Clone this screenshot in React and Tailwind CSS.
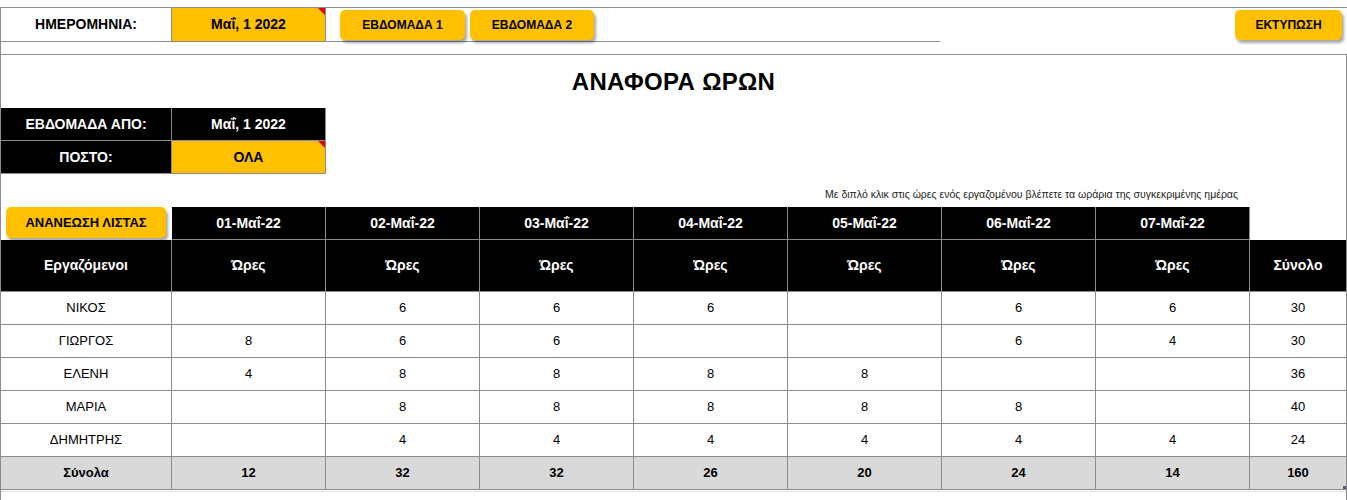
import React from 'react';

const LINE = 'border-[#8c8c8c]';

const days = ['01-Μαΐ-22', '02-Μαΐ-22', '03-Μαΐ-22', '04-Μαΐ-22', '05-Μαΐ-22', '06-Μαΐ-22', '07-Μαΐ-22'];

const rows = [
  { name: 'ΝΙΚΟΣ', hours: ['', 6, 6, 6, '', 6, 6], total: 30 },
  { name: 'ΓΙΩΡΓΟΣ', hours: [8, 6, 6, '', '', 6, 4], total: 30 },
  { name: 'ΕΛΕΝΗ', hours: [4, 8, 8, 8, 8, '', ''], total: 36 },
  { name: 'ΜΑΡΙΑ', hours: ['', 8, 8, 8, 8, 8, ''], total: 40 },
  { name: 'ΔΗΜΗΤΡΗΣ', hours: ['', 4, 4, 4, 4, 4, 4], total: 24 },
];

const totals = [12, 32, 32, 26, 20, 24, 14];

const Corner = () => (
  <span className="absolute top-0 right-0 w-0 h-0 border-l-[7px] border-l-transparent border-t-[7px] border-t-[#e3001b]" />
);

const YellowButton = ({ children, className = '' }) => (
  <button
    className={`bg-[#ffc000] rounded-[5px] font-bold text-black shadow-[2px_3px_3px_rgba(0,0,0,0.35)] ${className}`}
  >
    {children}
  </button>
);

const Cell = ({ children, className = '' }) => (
  <div className={`flex items-center justify-center border-r border-b ${LINE} ${className}`}>{children}</div>
);

export default function App() {
  return (
    <div className="w-[1347px] h-[500px] overflow-hidden bg-white text-black font-['Liberation_Sans',Arial,sans-serif]">
      <div className="h-[7px]" />

      {/* top bar */}
      <div className={`border-t ${LINE} h-[34px] flex`}>
        <div className={`w-[940px] flex border-b border-l ${LINE} h-[34px]`}>
          <div className={`w-[171px] h-full flex items-center justify-center border-r ${LINE} font-bold text-[14px]`}>
            ΗΜΕΡΟΜΗΝΙΑ:
          </div>
          <div className={`relative w-[154px] h-full flex items-center justify-center bg-[#ffc000] border-r ${LINE} font-bold text-[14px]`}>
            Μαΐ, 1 2022
            <Corner />
          </div>
          <div className="flex items-start pt-[2px] pl-[14px] gap-[5px]">
            <YellowButton className="w-[125px] h-[30px] text-[12px]">ΕΒΔΟΜΑΔΑ 1</YellowButton>
            <YellowButton className="w-[124px] h-[30px] text-[12px]">ΕΒΔΟΜΑΔΑ 2</YellowButton>
          </div>
        </div>
        <div className="flex-1 flex justify-end items-start pt-[2px] pr-[5px]">
          <YellowButton className="w-[107px] h-[30px] text-[12px]">ΕΚΤΥΠΩΣΗ</YellowButton>
        </div>
      </div>
      <div className={`h-[13px] border-l ${LINE}`} />

      {/* report frame */}
      <div className={`border-t border-l border-r ${LINE} h-[460px]`}>
        <div className="h-[53px] flex items-center justify-center">
          <h1 className="text-[24px] font-bold tracking-[0.3px]">ΑΝΑΦΟΡΑ ΩΡΩΝ</h1>
        </div>

        <div className="flex h-[33px]">
          <div className={`w-[171px] bg-black text-white font-bold text-[14px] flex items-center justify-center border-r border-b ${LINE}`}>
            ΕΒΔΟΜΑΔΑ ΑΠΟ:
          </div>
          <div className={`w-[154px] bg-black text-white font-bold text-[14px] flex items-center justify-center border-r border-b ${LINE}`}>
            Μαΐ, 1 2022
          </div>
        </div>
        <div className="flex h-[33px]">
          <div className={`w-[171px] bg-black text-white font-bold text-[14px] flex items-center justify-center border-r border-b ${LINE}`}>
            ΠΟΣΤΟ:
          </div>
          <div className={`relative w-[154px] bg-[#ffc000] font-bold text-[14px] flex items-center justify-center border-r border-b ${LINE}`}>
            ΟΛΑ
            <Corner />
          </div>
        </div>

        <div className="h-[33px] flex items-end justify-end pr-[108px] pb-[4px]">
          <p className="text-[10.5px] text-[#222]">
            Με διπλό κλικ στις ώρες ενός εργαζομένου βλέπετε τα ωράρια της συγκεκριμένης ημέρας
          </p>
        </div>

        {/* table */}
        <div className="grid grid-cols-[171px_repeat(7,154px)_1fr]">
          <div className="h-[33px] flex items-start pl-[5px]">
            <YellowButton className="w-[160px] h-[31px] text-[13px]">ΑΝΑΝΕΩΣΗ ΛΙΣΤΑΣ</YellowButton>
          </div>
          {days.map((d) => (
            <Cell key={d} className="h-[33px] bg-black text-white font-bold text-[14px]">
              {d}
            </Cell>
          ))}
          <div className="h-[33px]" />

          <Cell className="h-[52px] bg-black text-white font-bold text-[14px]">Εργαζόμενοι</Cell>
          {days.map((d) => (
            <Cell key={`h-${d}`} className="h-[52px] bg-black text-white font-bold text-[14px]">
              Ώρες
            </Cell>
          ))}
          <div className={`h-[52px] bg-black text-white font-bold text-[14px] flex items-center justify-center border-b ${LINE}`}>
            Σύνολο
          </div>

          {rows.map((r) => (
            <React.Fragment key={r.name}>
              <Cell className="h-[33px] text-[13px]">{r.name}</Cell>
              {r.hours.map((h, i) => (
                <Cell key={i} className="h-[33px] text-[13px]">
                  {h}
                </Cell>
              ))}
              <div className={`h-[33px] text-[13px] flex items-center justify-center border-b ${LINE}`}>{r.total}</div>
            </React.Fragment>
          ))}

          <Cell className="h-[33px] bg-[#d9d9d9] font-bold text-[13px]">Σύνολα</Cell>
          {totals.map((t, i) => (
            <Cell key={i} className="h-[33px] bg-[#d9d9d9] font-bold text-[13px]">
              {t}
            </Cell>
          ))}
          <div className={`relative h-[33px] bg-[#d9d9d9] font-bold text-[13px] flex items-center justify-center border-b ${LINE}`}>
            160
            <span className="absolute right-0 bottom-0 w-[3px] h-[3px] bg-[#4a5a8a]" />
          </div>
        </div>
        <div className="h-[2px] border-b border-[#e2e2e2]" />
      </div>
    </div>
  );
}
